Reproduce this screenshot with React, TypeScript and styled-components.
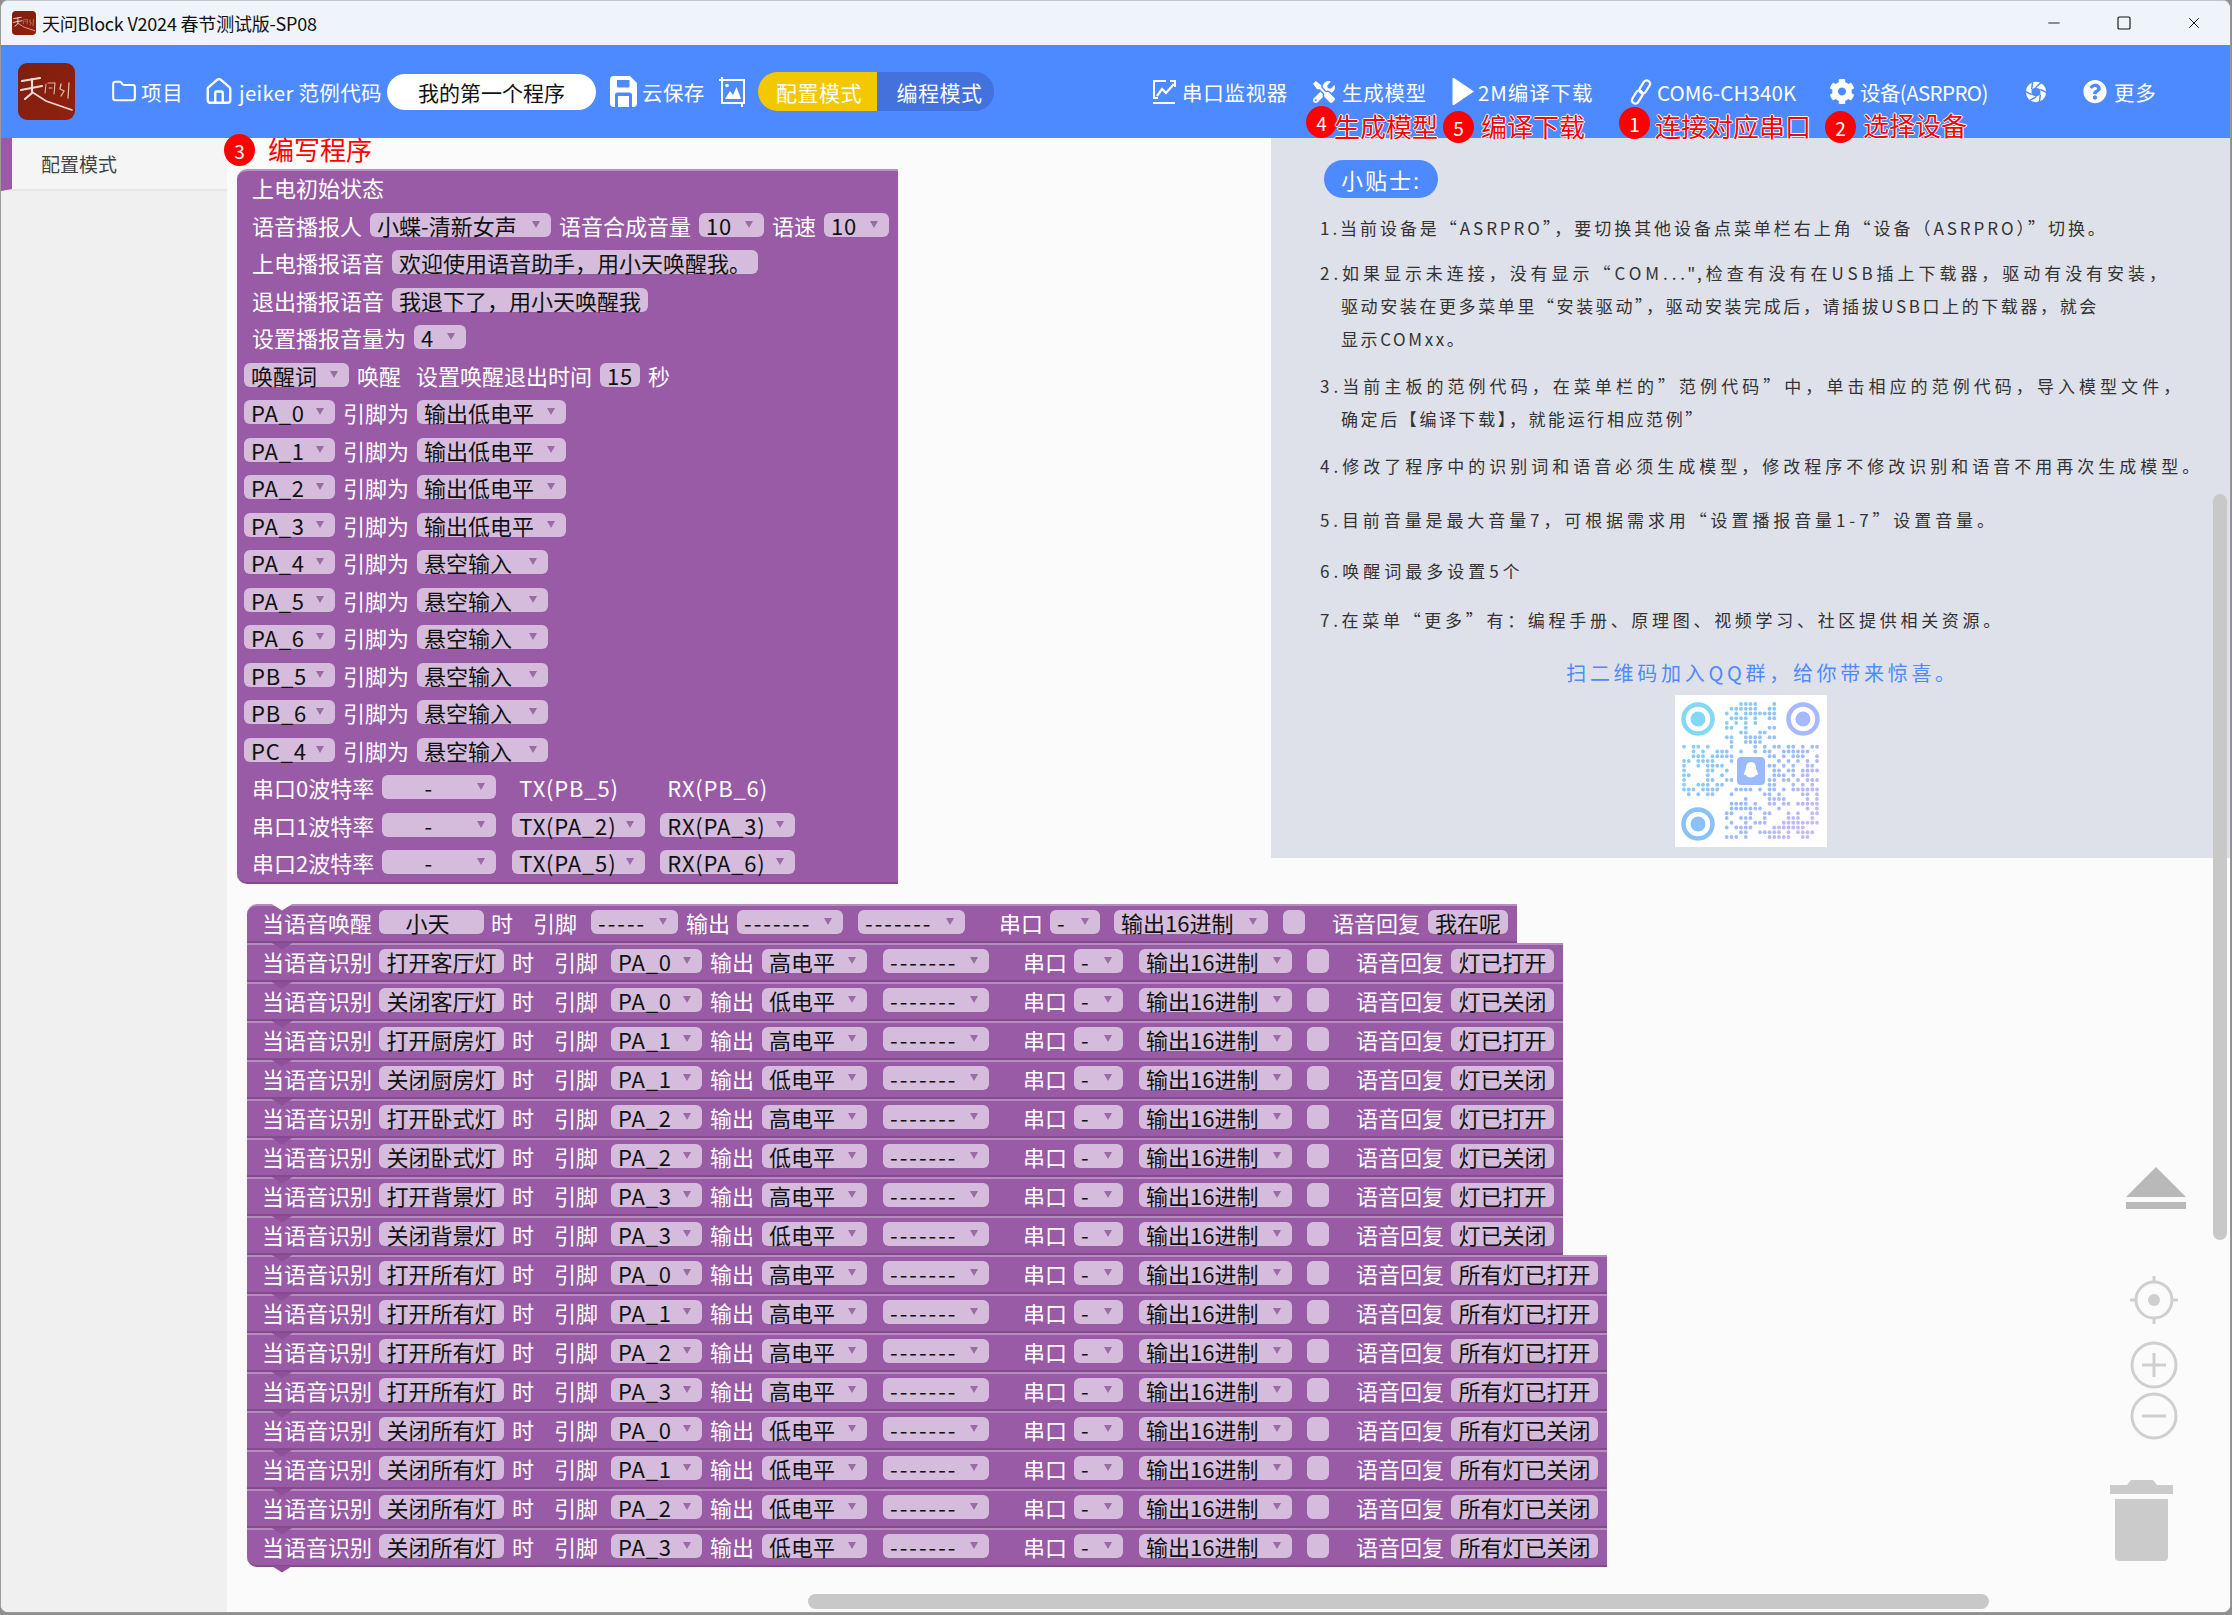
import React, { useMemo } from "react";
import styled, { createGlobalStyle } from "styled-components";
import { Folder, House, Minus, Square, X } from "lucide-react";
import { FaCog, FaQuestionCircle, FaTools } from "react-icons/fa";

const Global = createGlobalStyle`
  html, body { margin: 0; padding: 0; width: 2232px; height: 1615px; overflow: hidden; background: #8f8f8f; }
  * { box-sizing: border-box; }
  body { font-family: "Noto Sans CJK SC", "Noto Sans", sans-serif; }
`;

const Win = styled.div`
  position: relative; width: 2231px; height: 1613px; margin-left: 0; overflow: hidden;
  border-radius: 8px; border: 1px solid #9a9a9a; border-top: 1px solid #c4c6cc; background: #fbfbfb;
  display: flex; flex-direction: column;
`;
const TitleBar = styled.div`
  height: 44px; flex: none; background: #eff3fa; display: flex; align-items: center; padding-left: 11px;
`;
const TitleText = styled.div`
  margin-left: 6px; font-size: 18px; color: #111; white-space: nowrap; letter-spacing: -0.2px;
`;
const WinControls = styled.div`
  margin-left: auto; display: flex; align-items: center; color: #111;
`;
const WinButton = styled.div<{ $ml: number }>`
  margin-left: ${(p) => p.$ml}px; width: 18px; display: flex; justify-content: center;
`;
const Header = styled.div`
  height: 93px; flex: none; background: #4d8aff; display: flex; align-items: center; padding-left: 17px; color: #fff;
`;
const Slot = styled.div<{ $ml: number; $w: number }>`
  margin-left: ${(p) => p.$ml}px; width: ${(p) => p.$w}px; flex: none; display: flex; justify-content: center; align-items: center;
`;
const NavLabel = styled.div<{ $ml: number; $w: number; $ls?: number }>`
  margin-left: ${(p) => p.$ml}px; width: ${(p) => p.$w}px; flex: none; font-size: 20.5px; white-space: nowrap;
  letter-spacing: ${(p) => p.$ls ?? 0.7}px;
`;
const NamePill = styled.div`
  margin-left: 7px; width: 209px; height: 36px; flex: none; border-radius: 18px; background: #fff; color: #111;
  font-size: 21px; display: flex; align-items: center; justify-content: center;
`;
const ModeToggle = styled.div`
  margin-left: 13px; width: 236px; height: 39px; flex: none; border-radius: 20px; overflow: hidden; display: flex; background: #4472dd;
`;
const ModeTab = styled.div<{ $active?: boolean }>`
  width: ${(p) => (p.$active ? 119 : 117)}px; display: flex; align-items: center; justify-content: center; font-size: 21px; letter-spacing: 0.5px;
  padding-left: ${(p) => (p.$active ? 3 : 8)}px;
  background: ${(p) => (p.$active ? "#f2c800" : "#4472dd")}; color: #fff;
`;
const Body = styled.div`
  flex: 1; display: flex; min-height: 0;
`;
const Sidebar = styled.div`
  width: 226px; flex: none; background: #f0f0f0;
`;
const SideItem = styled.div`
  height: 53px; border-left: 11px solid #995ba5; border-bottom: 2px solid #e6e6e6; background: #f5f5f5;
  display: flex; align-items: center; padding-left: 29px; font-size: 19px; color: #444;
`;
const Workspace = styled.div`
  flex: 1; position: relative; background: #fbfbfb; min-width: 0;
`;
const TopRow = styled.div`
  display: flex; align-items: flex-start; justify-content: space-between;
`;
const SetupBlock = styled.div`
  margin: 31px 0 0 10px; width: 661px; background: #995ba5; border-radius: 10px 0 0 10px; color: #fff;
  border-top: 2px solid #b892c0; border-bottom: 2px solid #84498f;
`;
const SetupRows = styled.div`
  margin-top: -2px;
`;
const SetupRow = styled.div<{ $inset?: boolean }>`
  height: 37.5px; display: flex; align-items: center; gap: 8px; padding: 0 0 1px ${(p) => (p.$inset ? 7 : 15)}px;
`;
const Txt = styled.span<{ $ml?: number }>`
  font-size: 22px; color: #fff; white-space: nowrap; flex: none; margin-left: ${(p) => p.$ml ?? 0}px; line-height: 24px;
`;
const Pill = styled.div<{ $w: number; $ml?: number; $center?: boolean; $plain?: boolean; $ls: number; $pr: number }>`
  position: relative; flex: none; width: ${(p) => p.$w}px; height: 24px; margin-left: ${(p) => p.$ml ?? 0}px;
  border-radius: 6px; background: ${(p) => (p.$plain ? "transparent" : "#d5bcdc")};
  color: ${(p) => (p.$plain ? "#fff" : "#111")}; font-size: 22px; line-height: 24px; white-space: nowrap;
  padding-left: ${(p) => (p.$center ? 0 : 7)}px; padding-right: ${(p) => p.$pr}px; text-align: ${(p) => (p.$center ? "center" : "left")};
  letter-spacing: ${(p) => p.$ls}px;
`;
const Caret = styled.span`
  position: absolute; right: 11px; top: 8px; width: 0; height: 0;
  border-left: 4px solid transparent; border-right: 4px solid transparent; border-top: 7px solid #9b6ba6;
`;
const TipsPanel = styled.div`
  width: 959px; height: 720px; flex: none; background: #dfe1ea; padding: 22px 0 0 49px; color: #333;
`;
const TipsTag = styled.div`
  width: 114px; height: 38px; margin-left: 4px; border-radius: 19px; background: #4d8aff; color: #fff;
  font-size: 22px; letter-spacing: 2px; display: flex; align-items: center; justify-content: center;
`;
const Tip = styled.div<{ $mt: number }>`
  margin-top: ${(p) => p.$mt}px; font-size: 17px; line-height: 33px; white-space: nowrap; color: #333;
`;
const TipLine = styled.div<{ $indent?: boolean; $ls?: number }>`
  padding-left: ${(p) => (p.$indent ? 21 : 0)}px; letter-spacing: ${(p) => p.$ls ?? 2.6}px;
`;
const QQText = styled.div`
  margin: 20px 0 0 -49px; height: 33px; text-align: center; font-size: 20px; line-height: 33px; letter-spacing: 3.7px; color: #4d8aff;
  padding-left: 24px;
`;
const QRWrap = styled.div`
  width: 152px; height: 152px; margin: 6px 0 0 355px; background: #fff;
`;
const Stack = styled.div`
  margin: 20px 0 0 20px; display: flex; flex-direction: column; align-items: flex-start;
`;
const StackRow = styled.div<{ $first?: boolean; $last?: boolean }>`
  position: relative; height: 39px; display: flex; align-items: center; padding: 0 9px 3px 15px; background: #995ba5;
  border-top: 2px solid #b48cbd; border-bottom: 2px solid #84498f;
  border-radius: ${(p) => (p.$first ? "10px 0 0 0" : p.$last ? "0 0 0 10px" : "0")};
  &::before {
    content: ""; position: absolute; left: 24px; top: -2px; width: 22px; height: 7px;
    clip-path: polygon(0 0, 100% 0, 50% 100%);
    background: ${(p) => (p.$first ? "#fbfbfb" : "#8c5198")};
  }
  &::after {
    content: ${(p) => (p.$last ? '""' : "none")}; position: absolute; left: 24px; bottom: -8px; width: 22px; height: 7px;
    clip-path: polygon(0 0, 100% 0, 50% 100%); background: #8c5198;
  }
`;
const Annot = styled.div<{ $x: number; $y: number }>`
  position: absolute; left: ${(p) => p.$x}px; top: ${(p) => p.$y}px; display: flex; align-items: center; z-index: 5;
`;
const AnnotDot = styled.div`
  width: 31px; height: 32px; border-radius: 50%; background: #f00; color: #fff; font-size: 19px;
  display: flex; align-items: center; justify-content: center; flex: none;
`;
const AnnotText = styled.div<{ $ml: number; $dy?: number }>`
  margin-left: ${(p) => p.$ml}px; position: relative; top: ${(p) => p.$dy ?? 0}px; color: #f00; font-size: 26px; line-height: 32px; white-space: nowrap;
  text-shadow: 1px 0 0 #fff, -1px 0 0 #fff, 0 1px 0 #fff, 0 -1px 0 #fff;
`;
const PlainAnnotText = styled(AnnotText)`
  text-shadow: none;
`;
const VScroll = styled.div`
  position: absolute; right: 3px; top: 356px; width: 14px; height: 746px; border-radius: 7px; background: #c8c8c8; z-index: 4;
`;
const HScroll = styled.div`
  position: absolute; left: 581px; top: 1456px; width: 1181px; height: 15px; border-radius: 8px; background: #c8c8c8; z-index: 4;
`;
const Tool = styled.svg<{ $x: number; $y: number }>`
  position: absolute; left: ${(p) => p.$x}px; top: ${(p) => p.$y}px; z-index: 4; display: block;
`;

const Logo = ({ size }: { size: number }) => (
  <svg width={size} height={size} viewBox="0 0 57 57" style={{ display: "block", flex: "none" }}>
    <defs>
      <linearGradient id={`lg${size}`} x1="0" y1="0" x2="1" y2="1">
        <stop offset="0" stopColor="#7c1f0e" />
        <stop offset="1" stopColor="#93200f" />
      </linearGradient>
    </defs>
    <rect width="57" height="57" rx="9" fill={`url(#lg${size})`} />
    <g stroke="#ecdcd6" fill="none" strokeLinecap="round">
      <path d="M4 18 L22 15" strokeWidth="2.2" />
      <path d="M3 27 L24 23" strokeWidth="2.2" />
      <path d="M14 16 L14 30 L7 36" strokeWidth="2.2" />
      <path d="M14 29 L28 38 L54 47" strokeWidth="1.6" />
      <path d="M28 21 L27 30 M30 20 L37 20 L36 31" strokeWidth="1.1" stroke="#d9b8ae" />
      <path d="M31 25 L34 25" strokeWidth="1" stroke="#d9b8ae" />
      <path d="M43 21 L42 26 L46 28 L43 33 M51 20 L50 35" strokeWidth="1.3" stroke="#d9b8ae" />
    </g>
  </svg>
);

const FloppyIcon = () => (
  <svg width="27" height="31" viewBox="0 0 27 31">
    <path
      fill="#fff"
      fillRule="evenodd"
      d="M4 0H20L27 7V27a4 4 0 0 1-4 4H4a4 4 0 0 1-4-4V4a4 4 0 0 1 4-4ZM7 4V10a1.5 1.5 0 0 0 1.5 1.5H18a1.5 1.5 0 0 0 1.5-1.5V4ZM5 31V19a2.5 2.5 0 0 1 2.5-2.5H19.5A2.5 2.5 0 0 1 22 19V31H19V20H8V31Z"
    />
  </svg>
);
const PictureIcon = () => (
  <svg width="26" height="30" viewBox="0 0 26 30" fill="none" stroke="#fff" strokeWidth="2">
    <path d="M3 0V4M0 3H25V27M3 3V26H26M23 26V30" />
    <path d="M6 22L11 14L14 18L17.5 10L22 22Z" fill="#fff" stroke="none" />
    <circle cx="8" cy="8.500" r="1.8" fill="#fff" stroke="none" />
  </svg>
);
const ChartIcon = () => (
  <svg width="24" height="26" viewBox="0 0 24 26" fill="none" stroke="#fff" strokeWidth="2">
    <path d="M14 2H2V19H6M18 2H23V8M1 24H23" />
    <path d="M5 17L10 10L14 14L22 5" strokeWidth="2.2" />
  </svg>
);
const PlayIcon = () => (
  <svg width="23" height="29" viewBox="0 0 23 29">
    <path d="M2 1 L22 14.5 L2 28 Q0.500 28.500 0.500 27 V2 Q0.500 0.500 2 1Z" fill="#fff" />
  </svg>
);
const ChainIcon = () => (
  <svg width="22" height="26" viewBox="0 0 22 26" fill="none" stroke="#fff" strokeWidth="2.2">
    <rect x="-3.4" y="-6.500" width="6.800" height="14" rx="3.2" transform="translate(15 7.500) rotate(32)" />
    <rect x="-3.4" y="-7.500" width="6.800" height="14" rx="3.2" transform="translate(7 18.500) rotate(32)" />
  </svg>
);
const ApertureIcon = () => (
  <svg width="26" height="26" viewBox="0 0 26 26">
    <circle cx="13" cy="13" r="12" fill="#fff" />
    <g stroke="#4d8aff" strokeWidth="1.7">
      <path d="M13 7 L20 1" />
      <path d="M18.200 10 L25 13.500" />
      <path d="M18.200 16 L17 24.500" />
      <path d="M13 19 L5.500 23" />
      <path d="M7.800 16 L1 12.500" />
      <path d="M7.800 10 L9 1.500" />
    </g>
    <path d="M13 7 L18.200 10 V16 L13 19 L7.800 16 V10Z" fill="#4d8aff" />
  </svg>
);

const QR = () => {
  const dots = useMemo(() => {
    const out: { x: number; y: number }[] = [];
    let s = 20240208;
    for (let r = 0; r < 29; r++) {
      for (let c = 0; c < 29; c++) {
        s = (s * 1664525 + 1013904223) >>> 0;
        const on = (s >>> 16) % 100 < 54;
        const inTL = c < 9 && r < 9;
        const inTR = c > 19 && r < 9;
        const inBL = c < 9 && r > 19;
        const inMid = c > 10 && c < 18 && r > 10 && r < 18;
        if (on && !inTL && !inTR && !inBL && !inMid) out.push({ x: 9 + c * 4.75, y: 9 + r * 4.75 });
      }
    }
    return out;
  }, []);
  const Finder = ({ cx, cy, c }: { cx: number; cy: number; c: string }) => (
    <g>
      <circle cx={cx} cy={cy} r="14.5" fill="none" stroke={c} strokeWidth="4.5" />
      <circle cx={cx} cy={cy} r="7.5" fill={c} />
    </g>
  );
  return (
    <svg width="152" height="152" viewBox="0 0 152 152" style={{ display: "block" }}>
      <defs>
        <linearGradient id="qrg" gradientUnits="userSpaceOnUse" x1="0" y1="20" x2="152" y2="145">
          <stop offset="0" stopColor="#7fd8f4" />
          <stop offset="0.55" stopColor="#98bcfb" />
          <stop offset="1" stopColor="#d9b6fb" />
        </linearGradient>
      </defs>
      <g fill="url(#qrg)">
        {dots.map((d, i) => (
          <circle key={i} cx={d.x} cy={d.y} r="1.9" />
        ))}
      </g>
      <Finder cx={23} cy={24} c="#82d8f5" />
      <Finder cx={128} cy={24} c="#a6b9fe" />
      <Finder cx={23} cy={129} c="#88c1fc" />
      <rect x="62" y="62" width="28" height="28" rx="4" fill="#9bb9fd" />
      <path d="M76 67c-3.600 0-5 3-5 6 0 2-2 4-2 6 0 1 1 1.500 2 .5 .5 2 2 3 5 3s4.500-1 5-3c1 1 2 .5 2-.5 0-2-2-4-2-6 0-3-1.400-6-5-6Z" fill="#fff" />
    </svg>
  );
};

type P = { w: number; t?: string; ml?: number; center?: boolean; noCaret?: boolean; plain?: boolean; spaced?: boolean; pr?: number };
const Dd = ({ w, t, ml, center, noCaret, plain, spaced, pr }: P) => {
  const ascii = !!t && /^[A-Za-z0-9_()]+$/.test(t);
  return (
    <Pill $w={w} $ml={ml} $center={center} $plain={plain} $ls={spaced ? 2 : ascii ? 0.8 : 0} $pr={pr ?? 0}>
      {t}
      {!noCaret && !plain && <Caret />}
    </Pill>
  );
};

const CmdRow = ({ word, pin, level, reply, last }: { word: string; pin: string; level: string; reply: string; last?: boolean }) => (
  <StackRow $last={last}>
    <Txt>当语音识别</Txt>
    <Dd w={125} t={word} ml={7} noCaret center />
    <Txt $ml={8}>时</Txt>
    <Txt $ml={20}>引脚</Txt>
    <Dd w={91} t={pin} ml={13} />
    <Txt $ml={8}>输出</Txt>
    <Dd w={105} t={level} ml={8} />
    <Dd w={106} t="-------" ml={16} spaced />
    <Txt $ml={34}>串口</Txt>
    <Dd w={49} t="-" ml={7} />
    <Dd w={153} t="输出16进制" ml={16} />
    <Dd w={22} ml={15} noCaret />
    <Txt $ml={27}>语音回复</Txt>
    <Dd w={reply.length > 4 ? 147 : 103} t={reply} ml={7} noCaret center />
  </StackRow>
);

const WakeRow = () => (
  <StackRow $first>
    <Txt>当语音唤醒</Txt>
    <Dd w={105} t="小天" ml={7} noCaret center pr={8} />
    <Txt $ml={7}>时</Txt>
    <Txt $ml={20}>引脚</Txt>
    <Dd w={87} t="-----" ml={14} spaced />
    <Txt $ml={8}>输出</Txt>
    <Dd w={106} t="-------" ml={7} spaced />
    <Dd w={107} t="-------" ml={15} spaced />
    <Txt $ml={34}>串口</Txt>
    <Dd w={50} t="-" ml={7} />
    <Dd w={154} t="输出16进制" ml={14} />
    <Dd w={22} ml={15} noCaret />
    <Txt $ml={27}>语音回复</Txt>
    <Dd w={80} t="我在呢" ml={8} noCaret center />
  </StackRow>
);

const pinRows: [string, string, number][] = [
  ["PA_0", "输出低电平", 149], ["PA_1", "输出低电平", 149], ["PA_2", "输出低电平", 149], ["PA_3", "输出低电平", 149],
  ["PA_4", "悬空输入", 131], ["PA_5", "悬空输入", 131], ["PA_6", "悬空输入", 131],
  ["PB_5", "悬空输入", 131], ["PB_6", "悬空输入", 131], ["PC_4", "悬空输入", 131],
];
const on = "高电平";
const off = "低电平";
const cmds: [string, string, string, string][] = [
  ["打开客厅灯", "PA_0", on, "灯已打开"], ["关闭客厅灯", "PA_0", off, "灯已关闭"],
  ["打开厨房灯", "PA_1", on, "灯已打开"], ["关闭厨房灯", "PA_1", off, "灯已关闭"],
  ["打开卧式灯", "PA_2", on, "灯已打开"], ["关闭卧式灯", "PA_2", off, "灯已关闭"],
  ["打开背景灯", "PA_3", on, "灯已打开"], ["关闭背景灯", "PA_3", off, "灯已关闭"],
  ["打开所有灯", "PA_0", on, "所有灯已打开"], ["打开所有灯", "PA_1", on, "所有灯已打开"],
  ["打开所有灯", "PA_2", on, "所有灯已打开"], ["打开所有灯", "PA_3", on, "所有灯已打开"],
  ["关闭所有灯", "PA_0", off, "所有灯已关闭"], ["关闭所有灯", "PA_1", off, "所有灯已关闭"],
  ["关闭所有灯", "PA_2", off, "所有灯已关闭"], ["关闭所有灯", "PA_3", off, "所有灯已关闭"],
];

export default function App() {
  return (
    <>
      <Global />
      <Win>
        <TitleBar>
          <Logo size={24} />
          <TitleText>天问Block V2024 春节测试版-SP08</TitleText>
          <WinControls>
            <WinButton $ml={0}><Minus size={18} strokeWidth={1.2} /></WinButton>
            <WinButton $ml={52}><Square size={16} strokeWidth={1.7} /></WinButton>
            <WinButton $ml={52}><X size={22} strokeWidth={1.3} /></WinButton>
            <WinButton $ml={9}> </WinButton>
          </WinControls>
        </TitleBar>
        <Header>
          <Logo size={57} />
          <Slot $ml={36} $w={26}><Folder size={29} strokeWidth={1.9} color="#fff" /></Slot>
          <NavLabel $ml={4} $w={42}>项目</NavLabel>
          <Slot $ml={21} $w={30}><House size={31} strokeWidth={1.9} color="#fff" /></Slot>
          <NavLabel $ml={5} $w={141} $ls={0.3}>jeiker 范例代码</NavLabel>
          <NamePill>我的第一个程序</NamePill>
          <Slot $ml={14} $w={27}><FloppyIcon /></Slot>
          <NavLabel $ml={5} $w={62} $ls={0.4}>云保存</NavLabel>
          <Slot $ml={15} $w={26}><PictureIcon /></Slot>
          <ModeToggle>
            <ModeTab $active>配置模式</ModeTab>
            <ModeTab>编程模式</ModeTab>
          </ModeToggle>
          <Slot $ml={158} $w={24}><ChartIcon /></Slot>
          <NavLabel $ml={6} $w={107}>串口监视器</NavLabel>
          <Slot $ml={24} $w={22}><FaTools size={26} color="#fff" /></Slot>
          <NavLabel $ml={7} $w={84}>生成模型</NavLabel>
          <Slot $ml={26} $w={23}><PlayIcon /></Slot>
          <NavLabel $ml={3} $w={115} $ls={0.9}>2M编译下载</NavLabel>
          <Slot $ml={37} $w={22}><ChainIcon /></Slot>
          <NavLabel $ml={5} $w={138} $ls={0.1}>COM6-CH340K</NavLabel>
          <Slot $ml={34} $w={26}><FaCog size={27} color="#fff" /></Slot>
          <NavLabel $ml={5} $w={127} $ls={-0.6}>设备(ASRPRO)</NavLabel>
          <Slot $ml={38} $w={22}><ApertureIcon /></Slot>
          <Slot $ml={36} $w={24}><FaQuestionCircle size={25} color="#fff" /></Slot>
          <NavLabel $ml={7} $w={43}>更多</NavLabel>
        </Header>
        <Annot $x={1305} $y={105}><AnnotDot>4</AnnotDot><AnnotText $ml={-3} $dy={4}>生成模型</AnnotText></Annot>
        <Annot $x={1442} $y={110}><AnnotDot>5</AnnotDot><AnnotText $ml={7} $dy={-1}>编译下载</AnnotText></Annot>
        <Annot $x={1618} $y={106}><AnnotDot>1</AnnotDot><AnnotText $ml={5} $dy={3}>连接对应串口</AnnotText></Annot>
        <Annot $x={1824} $y={110}><AnnotDot>2</AnnotDot><AnnotText $ml={7} $dy={-2}>选择设备</AnnotText></Annot>
        <Annot $x={223} $y={133}><AnnotDot>3</AnnotDot><PlainAnnotText $ml={13} $dy={-1}>编写程序</PlainAnnotText></Annot>
        <Body>
          <Sidebar><SideItem>配置模式</SideItem></Sidebar>
          <Workspace>
            <TopRow>
              <SetupBlock>
                <SetupRows>
                  <SetupRow><Txt>上电初始状态</Txt></SetupRow>
                  <SetupRow>
                    <Txt>语音播报人</Txt>
                    <Dd w={181} t="小蝶-清新女声" />
                    <Txt>语音合成音量</Txt>
                    <Dd w={65} t="10" />
                    <Txt>语速</Txt>
                    <Dd w={65} t="10" />
                  </SetupRow>
                  <SetupRow><Txt>上电播报语音</Txt><Dd w={366} t="欢迎使用语音助手，用小天唤醒我。" noCaret /></SetupRow>
                  <SetupRow><Txt>退出播报语音</Txt><Dd w={256} t="我退下了，用小天唤醒我" noCaret /></SetupRow>
                  <SetupRow><Txt>设置播报音量为</Txt><Dd w={52} t="4" /></SetupRow>
                  <SetupRow $inset>
                    <Dd w={105} t="唤醒词" />
                    <Txt>唤醒</Txt>
                    <Txt $ml={7}>设置唤醒退出时间</Txt>
                    <Dd w={40} t="15" center noCaret />
                    <Txt>秒</Txt>
                  </SetupRow>
                  {pinRows.map(([pin, mode, w]) => (
                    <SetupRow $inset key={pin}>
                      <Dd w={91} t={pin} />
                      <Txt>引脚为</Txt>
                      <Dd w={w} t={mode} />
                    </SetupRow>
                  ))}
                  <SetupRow>
                    <Txt>串口0波特率</Txt>
                    <Dd w={114} t="-" center pr={22} />
                    <Dd w={133} t="TX(PB_5)" ml={8} plain />
                    <Dd w={135} t="RX(PB_6)" ml={7} plain />
                  </SetupRow>
                  <SetupRow>
                    <Txt>串口1波特率</Txt>
                    <Dd w={114} t="-" center pr={22} />
                    <Dd w={133} t="TX(PA_2)" ml={8} />
                    <Dd w={135} t="RX(PA_3)" ml={7} />
                  </SetupRow>
                  <SetupRow>
                    <Txt>串口2波特率</Txt>
                    <Dd w={114} t="-" center pr={22} />
                    <Dd w={133} t="TX(PA_5)" ml={8} />
                    <Dd w={135} t="RX(PA_6)" ml={7} />
                  </SetupRow>
                </SetupRows>
              </SetupBlock>
              <TipsPanel>
                <TipsTag>小贴士:</TipsTag>
                <Tip $mt={13}><TipLine $ls={2.95}>1.当前设备是“ASRPRO”，要切换其他设备点菜单栏右上角“设备（ASRPRO）”切换。</TipLine></Tip>
                <Tip $mt={12}>
                  <TipLine $ls={3.95}>2.如果显示未连接，没有显示“COM...",检查有没有在USB插上下载器，驱动有没有安装，</TipLine>
                  <TipLine $indent>驱动安装在更多菜单里“安装驱动”，驱动安装完成后，请插拔USB口上的下载器，就会</TipLine>
                  <TipLine $indent>显示COMxx。</TipLine>
                </Tip>
                <Tip $mt={14}>
                  <TipLine $ls={4.05}>3.当前主板的范例代码，在菜单栏的”范例代码”中，单击相应的范例代码，导入模型文件，</TipLine>
                  <TipLine $indent>确定后【编译下载】，就能运行相应范例”</TipLine>
                </Tip>
                <Tip $mt={14}><TipLine $ls={4}>4.修改了程序中的识别词和语音必须生成模型，修改程序不修改识别和语音不用再次生成模型。</TipLine></Tip>
                <Tip $mt={21}><TipLine $ls={3.9}>5.目前音量是最大音量7，可根据需求用“设置播报音量1-7”设置音量。</TipLine></Tip>
                <Tip $mt={18}><TipLine $ls={4}>6.唤醒词最多设置5个</TipLine></Tip>
                <Tip $mt={16}><TipLine $ls={3.7}>7.在菜单“更多”有：编程手册、原理图、视频学习、社区提供相关资源。</TipLine></Tip>
                <QQText>扫二维码加入QQ群，给你带来惊喜。</QQText>
                <QRWrap><QR /></QRWrap>
              </TipsPanel>
            </TopRow>
            <Stack>
              <WakeRow />
              {cmds.map(([w, p, l, r], i) => (
                <CmdRow key={i} word={w} pin={p} level={l} reply={r} last={i === cmds.length - 1} />
              ))}
            </Stack>
            <VScroll />
            <HScroll />
            <Tool $x={1898} $y={1028} width="62" height="44" viewBox="0 0 62 44">
              <path d="M31 1 L61 31 H1 Z M1 36 H61 V43 H1 Z" fill="#b9b9b9" />
            </Tool>
            <Tool $x={1902} $y={1137} width="50" height="50" viewBox="0 0 50 50" fill="none" stroke="#cfcfcf" strokeWidth="3">
              <circle cx="25" cy="25" r="18" />
              <path d="M25 1V8M25 42V49M1 25H8M42 25H49" />
              <circle cx="25" cy="25" r="6" fill="#cfcfcf" stroke="none" />
            </Tool>
            <Tool $x={1902} $y={1202} width="50" height="50" viewBox="0 0 50 50" fill="none" stroke="#cfcfcf" strokeWidth="3">
              <circle cx="25" cy="25" r="22" />
              <path d="M25 13V37M13 25H37" />
            </Tool>
            <Tool $x={1902} $y={1253} width="50" height="50" viewBox="0 0 50 50" fill="none" stroke="#cfcfcf" strokeWidth="3">
              <circle cx="25" cy="25" r="22" />
              <path d="M13 25H37" />
            </Tool>
            <Tool $x={1883} $y={1342} width="64" height="82" viewBox="0 0 64 82">
              <path d="M0 5 H17 L21 0 H43 L47 5 H63 V14 H0 Z" fill="#cbcbcb" />
              <path d="M5 19 H58 V77 a4 4 0 0 1 -4 4 H9 a4 4 0 0 1 -4 -4 Z" fill="#cbcbcb" />
            </Tool>
          </Workspace>
        </Body>
      </Win>
    </>
  );
}
